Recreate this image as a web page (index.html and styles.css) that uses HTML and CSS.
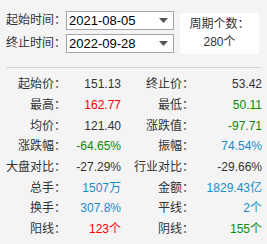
FILE: index.html
```html
<!DOCTYPE html>
<html>
<head>
<meta charset="utf-8">
<link rel="stylesheet" href="styles.css">
</head>
<body>
<div class="panel">
  <div class="top">
    <div class="dates">
      <div class="date-row">
        <span class="date-label">起始时间：</span>
        <div class="date-input"><span class="date-text">2021-08-05</span><svg class="arrow" width="9" height="5" viewBox="0 0 9 5"><path d="M0 0H9L4.5 5Z" fill="#555"/></svg></div>
      </div>
      <div class="date-row">
        <span class="date-label">终止时间：</span>
        <div class="date-input"><span class="date-text">2022-09-28</span><svg class="arrow" width="9" height="5" viewBox="0 0 9 5"><path d="M0 0H9L4.5 5Z" fill="#555"/></svg></div>
      </div>
    </div>
    <div class="period">
      <div>周期个数：</div>
      <div>280个</div>
    </div>
  </div>
  <div class="divider"></div>
  <div class="stats">
    <span class="lbl">起始价：</span><span class="val">151.13</span>
    <span class="lbl r">终止价：</span><span class="val">53.42</span>
    <span class="lbl">最高：</span><span class="val red">162.77</span>
    <span class="lbl r">最低：</span><span class="val green">50.11</span>
    <span class="lbl">均价：</span><span class="val">121.40</span>
    <span class="lbl r">涨跌值：</span><span class="val green">-97.71</span>
    <span class="lbl">涨跌幅：</span><span class="val green">-64.65%</span>
    <span class="lbl r">振幅：</span><span class="val blue">74.54%</span>
    <span class="lbl">大盘对比：</span><span class="val">-27.29%</span>
    <span class="lbl r">行业对比：</span><span class="val">-29.66%</span>
    <span class="lbl">总手：</span><span class="val blue">1507万</span>
    <span class="lbl r">金额：</span><span class="val blue">1829.43亿</span>
    <span class="lbl">换手：</span><span class="val blue">307.8%</span>
    <span class="lbl r">平线：</span><span class="val blue">2个</span>
    <span class="lbl">阳线：</span><span class="val red">123个</span>
    <span class="lbl r">阴线：</span><span class="val green">155个</span>
  </div>
</div>
</body>
</html>
```
FILE: styles.css
```css
html, body {
  margin: 0;
  padding: 0;
  background: #f4f4f4;
}
body {
  width: 267px;
  height: 244px;
  overflow: hidden;
  font-family: "Liberation Sans", "Noto Sans CJK SC", sans-serif;
  font-size: 12px;
  color: #333;
}
.panel {
  padding: 0;
}
.top {
  display: flex;
  align-items: flex-start;
  padding-top: 11px;
}
.dates {
  display: flex;
  flex-direction: column;
  gap: 4px;
}
.date-row {
  display: flex;
  align-items: center;
}
.date-label {
  width: 66px;
  text-align: right;
  font-size: 12px;
  line-height: 19px;
}
.date-input {
  box-sizing: border-box;
  width: 108px;
  height: 19px;
  background: #fff;
  border: 1px solid #a5a5a5;
  display: flex;
  align-items: center;
  justify-content: space-between;
  padding: 0 5px 0 2px;
}
.date-text {
  font-size: 13px;
  color: #000;
  line-height: 17px;
}
.arrow {
  display: block;
}
.period {
  margin-left: 6px;
  margin-top: 2px;
  width: 79px;
  height: 41px;
  box-sizing: border-box;
  background: #fff;
  border-radius: 3px;
  display: flex;
  flex-direction: column;
  align-items: center;
  justify-content: center;
  gap: 1px;
  line-height: 17px;
  font-size: 12px;
}
.divider {
  margin: 13px 6px 0 6px;
  height: 1px;
  background: #d6d6d6;
}
.stats {
  display: grid;
  grid-template-columns: 66px 55px 73px 68px;
  grid-auto-rows: 20.7px;
  align-items: center;
  margin-top: 6px;
  line-height: 14px;
}
.lbl {
  text-align: right;
}
.val {
  text-align: right;
}
.red { color: #ff0000; }
.green { color: #0a8a0a; }
.blue { color: #1a8cc8; }
```
